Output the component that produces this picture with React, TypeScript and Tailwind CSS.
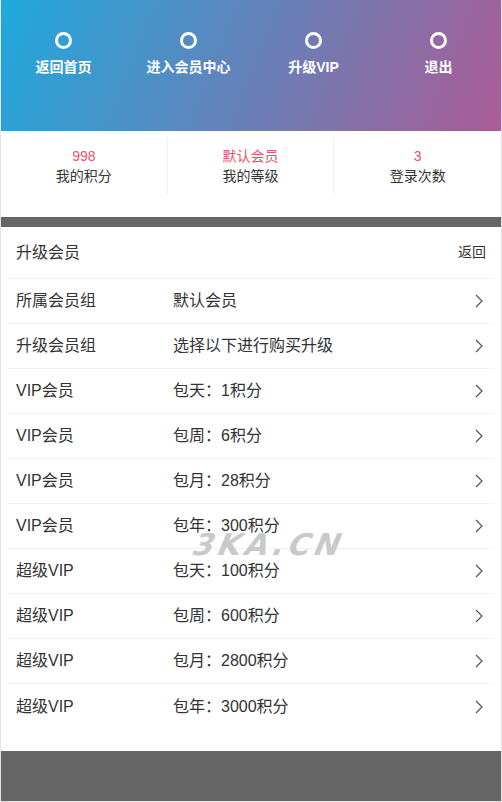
const navItems = ['返回首页', '进入会员中心', '升级VIP', '退出']

const stats = [
  { value: '998', label: '我的积分' },
  { value: '默认会员', label: '我的等级' },
  { value: '3', label: '登录次数' },
]

const rows = [
  ['所属会员组', '默认会员'],
  ['升级会员组', '选择以下进行购买升级'],
  ['VIP会员', '包天：1积分'],
  ['VIP会员', '包周：6积分'],
  ['VIP会员', '包月：28积分'],
  ['VIP会员', '包年：300积分'],
  ['超级VIP', '包天：100积分'],
  ['超级VIP', '包周：600积分'],
  ['超级VIP', '包月：2800积分'],
  ['超级VIP', '包年：3000积分'],
]

function Chevron() {
  return (
    <svg width="8" height="14" viewBox="0 0 8 14" fill="none" className="shrink-0">
      <polyline points="1,1 7,7 1,13" stroke="#555" strokeWidth="1.2" />
    </svg>
  )
}

export default function App() {
  return (
    <div
      className="w-[502px] h-[802px] flex flex-col border-x border-b border-[#e3e3e3] bg-white text-[#333]"
      style={{ fontFamily: '"Liberation Sans", "Noto Sans CJK SC", sans-serif' }}
    >
      {/* top nav */}
      <div className="h-[131px] shrink-0 grid grid-cols-4 bg-linear-[112deg] from-[#1fa9dd] to-[#ab5b95] pt-[32px]">
        {navItems.map((t) => (
          <div key={t} className="flex flex-col items-center">
            <div className="w-[17px] h-[17px] rounded-full border-[3px] border-white" />
            <span className="mt-[8px] text-[14px] leading-[20px] font-bold text-white">{t}</span>
          </div>
        ))}
      </div>

      {/* stats */}
      <div className="h-[86px] shrink-0 grid grid-cols-3 pt-[6px]">
        {stats.map((s, i) => (
          <div
            key={s.label}
            className={`h-[58px] flex flex-col items-center pt-[9px] ${i < 2 ? 'border-r border-[#f1f1f1]' : ''}`}
          >
            <span className="text-[14px] leading-[20px] text-[#e9536a]">{s.value}</span>
            <span className="text-[14px] leading-[20px] text-[#333]">{s.label}</span>
          </div>
        ))}
      </div>

      <div className="h-[10px] shrink-0 bg-[#666]" />

      {/* list */}
      <div className="relative flex-1 flex flex-col">
        <div className="mx-[5px] mr-[6px] h-[52px] flex items-center justify-between pl-[10px] pr-[9px] border-b border-[#f2f2f2]">
          <span className="text-[16px]">升级会员</span>
          <span className="text-[14px]">返回</span>
        </div>
        {rows.map(([a, b], i) => (
          <div
            key={i}
            className={`mx-[5px] mr-[6px] h-[45px] flex items-center pl-[10px] pr-[12px] ${
              i < rows.length - 1 ? 'border-b border-[#f2f2f2]' : ''
            }`}
          >
            <span className="w-[157px] text-[16px]">{a}</span>
            <span className="flex-1 text-[16px]">{b}</span>
            <Chevron />
          </div>
        ))}

        <span
          className="absolute left-[193px] top-[303px] text-[30px] leading-[30px] font-bold tracking-[4px] -skew-x-[22deg] text-[#c9c9c9] pointer-events-none select-none"
          style={{ fontFamily: '"DejaVu Sans", sans-serif' }}
        >
          3KA.CN
        </span>

        <div className="flex-1" />
        <div className="h-[50px] shrink-0 bg-[#666]" />
      </div>
    </div>
  )
}
